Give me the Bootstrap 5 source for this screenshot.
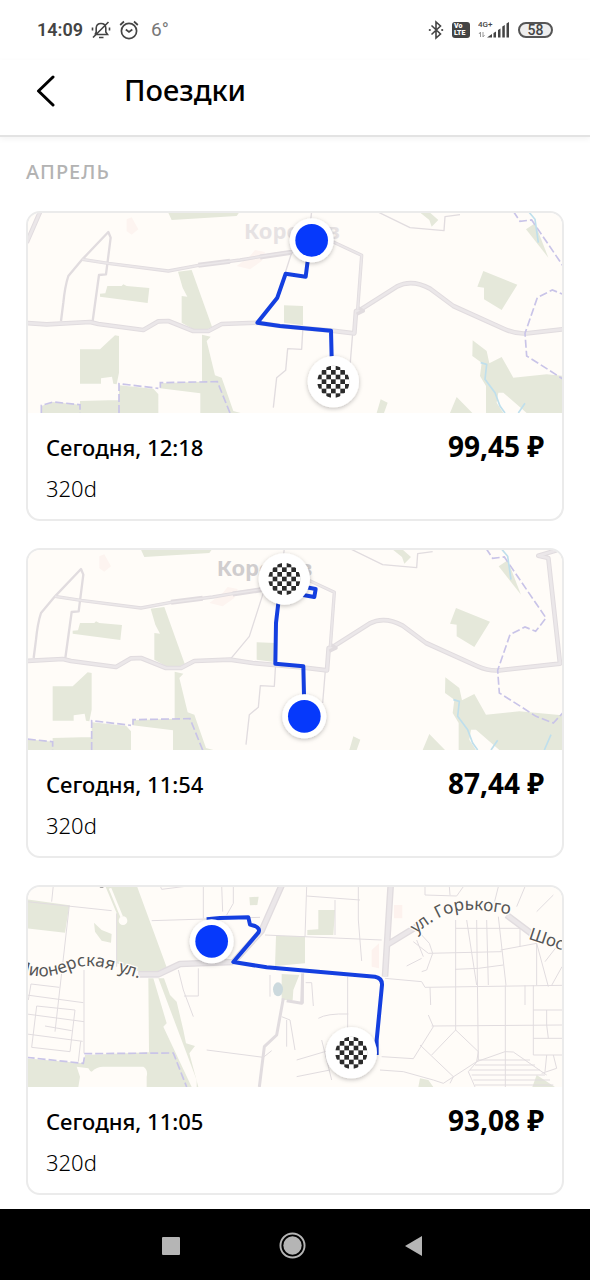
<!DOCTYPE html>
<html lang="ru">
<head>
<meta charset="utf-8">
<meta name="viewport" content="width=device-width, initial-scale=1">
<title>Поездки</title>
<link href="https://cdn.jsdelivr.net/npm/bootstrap@5.3.0/dist/css/bootstrap.min.css" rel="stylesheet">
<style>
  body { font-family: "Noto Sans", sans-serif; color: #000; background: #fff; }
  .status { height: 60px; padding: 0 37px; font-family: Roboto, sans-serif; font-size: 18px; line-height: 24px; color: #444; }
  .status svg { display: block; }
  .clock { font-weight: 600; }
  .temp { color: #777; font-size: 19px; margin-left: 12px; }
  .battery { width: 35px; height: 16px; border: 2px solid #555; border-radius: 8px; background: #eee; font-size: 14px; line-height: 12px; font-weight: 500; text-align: center; }
  .volte { width: 18px; height: 16px; border-radius: 3px; background: #444; color: #fff; font-size: 7px; line-height: 7px; font-weight: 900; padding: 1px 2px; }
  .topbar { height: 77px; padding: 0 26px; border-bottom: 2px solid #e3e3e3; box-shadow: 0 2px 6px #0000000d; }
  .topbar h1 { font-size: 29px; line-height: 36px; font-weight: 500; padding-left: 10px; }
  .back { width: 40px; height: 40px; }
  .month { font-size: 20px; line-height: 30px; font-weight: 500; color: #b3b3b3; letter-spacing: 1px; }
  .trips { padding: 20px 26px 14px; }
  .trip-list { gap: 27px; }
  .trip { border: 2px solid #ebebeb; border-radius: 14px; overflow: hidden; }
  .trip-map { display: block; width: 100%; height: 200px; background: #fffcf8; }
  .trip-info { height: 106px; padding: 16px 18px 0; }
  .when { font-size: 22px; line-height: 36px; font-weight: 500; }
  .car { font-size: 22px; line-height: 30px; padding-top: 8px; font-weight: 350; }
  .price { font-size: 28px; line-height: 34px; font-weight: 700; }
  .sysnav { height: 71px; background: #000; }
  .sysnav-keys { gap: 99px; padding-right: 6px; padding-top: 2px; }
  .green { fill: #e5e8da; }
  .road { fill: none; stroke: #e1dcdf; stroke-linejoin: round; }
  .lane { fill: none; stroke: #ebe7e9; stroke-linejoin: round; }
  .border-line { fill: none; stroke: #c9c4e8; stroke-width: 5; stroke-dasharray: 24 9; }
  .water { fill: none; stroke: #bfdfec; stroke-width: 5; }
  .route { fill: none; stroke: #143fe0; stroke-width: 12; stroke-linejoin: round; }
  .town { font: 700 66px "Noto Sans", sans-serif; }
  .street { font: 400 51px "Noto Sans", sans-serif; fill: #555; stroke: #fffcf8; stroke-width: 8; paint-order: stroke; }
</style>
</head>
<body class="d-flex flex-column min-vh-100">

<svg width="0" height="0" class="position-absolute" aria-hidden="true">
  <defs>
    <filter id="soft" x="-30%" y="-30%" width="160%" height="160%"><feDropShadow dx="0" dy="4" stdDeviation="6" flood-color="#000" flood-opacity=".25"/></filter>
    <pattern id="checks" x="-7" y="-7" width="28" height="28" patternUnits="userSpaceOnUse">
      <path d="M0 0h14v14H0zM14 14h14v14H14z" fill="#2b2b2b"/>
    </pattern>
    <g id="start"><circle r="66" fill="#fff" filter="url(#soft)"/><circle r="49" fill="#0639fb"/></g>
    <g id="finish"><circle r="77" fill="#fff" filter="url(#soft)"/><circle r="48" fill="url(#checks)"/></g>

    <g id="town-map">
      <g class="green">
        <path d="M443 16H660L650 30 455 42z"/>
        <path d="M240 272V263L256 262 262 240 305 240 310 235 320 240 388 246 383 291z"/>
        <path d="M474 197 515 192 576 362 562 370H520L485 350V270L502 272 488 245z"/>
        <path d="M546 386 572 392 560 405 585 508 605 515 640 615 662 621H541V562L420 547V532L546 527z"/>
        <path d="M180 430H240L285 388 297 390V500L290 535 280 533 276 512 243 517V533H180z"/>
        <path d="M297 538 400 548 415 565V621H297zM64 621V600L100 588 180 596V585L297 582V621z"/>
        <path d="M792 298 849 300V358L792 350z"/>
        <path d="M1198 18 1230 20 1255 42 1235 62 1228 42z"/>
        <path d="M1518 70 1545 52 1585 155z"/>
        <path d="M1390 195 1492 236 1445 312 1392 280V245L1372 242z"/>
        <path d="M1358 403 1400 435 1408 472 1445 453 1480 515 1580 505 1720 518V621H1520L1450 560 1435 560 1430 590 1450 621H1398V540L1380 510 1385 470 1357 450z"/>
        <path d="M1070 621 1082 580 1103 590 1092 621zM1290 621 1310 573 1357 621z"/>
      </g>
      <path d="M320 40 335 34 355 70 335 86 320 76zM690 150 705 132 735 138 725 165 690 190 650 180z" fill="#fdf4f0"/>
      <g class="road" stroke-width="4">
        <path d="M998 382 990 480M760 605 770 515 797 493 803 428 845 430 849 360M815 140 770 280 712 350M875 16 870 60M1070 16 1170 65 1272 74 1275 32 1320 26"/>
        <path stroke-width="7" d="M123 345 130 290Q135 240 145 210L187 160 265 78 272 95 258 205 237 207 218 345"/>
      </g>
      <path class="road" stroke-width="14" d="M20 110 60 18M20 351 80 355 210 348 235 354 370 372 415 346 445 345 520 375H565L605 354 712 350 780 360 935 374 1003 382 1008 315 1020 312 1130 242Q1175 218 1230 248L1300 300 1455 370Q1490 385 1520 382L1702 362 1667 45 1637 38 1692 22"/>
      <path class="lane" stroke-width="8" d="M20 110 60 18M20 351 80 355 210 348 235 354 370 372 415 346 445 345 520 375H565L605 354 712 350 780 360 935 374 1003 382 1008 315 1020 312 1130 242Q1175 218 1230 248L1300 300 1455 370Q1490 385 1520 382L1702 362 1667 45 1637 38 1692 22"/>
      <path class="road" stroke-width="10" d="M187 160 265 172 445 195 535 178 660 162 720 152 815 138 940 108 1025 148 1013 310M1015 305 1030 315 1010 325"/>
      <path class="road" stroke-width="15" d="M535 178 630 166M720 153 815 139"/>
      <path class="lane" stroke-width="5" d="M187 160 265 172 445 195 535 178 660 162 720 152 815 138 940 108 1025 148 1013 310"/>
      <path class="border-line" d="M64 621V598L100 588 180 596V621M297 621V533L415 547M421 545V530L592 527 630 621M1480 16 1500 46 1535 42 1660 225 1629 265 1597 252 1552 275 1515 382 1520 450 1560 475 1630 520 1682 540 1710 510"/>
      <path class="water" d="M1525 16 1545 40 1555 110M1382 470 1400 475 1395 520 1425 560 1440 600 1455 621M1495 621 1515 592M1655 621 1675 575"/>
    </g>
  </defs>
</svg>

<div class="status d-flex align-items-center justify-content-between">
  <div class="d-flex align-items-center">
    <span class="clock">14:09</span>
    <svg class="ms-2" width="20" height="20" viewBox="0 0 20 20" fill="none" stroke="#444" stroke-width="1.6" aria-label="Без звука">
      <path d="M4 14.500h12.500l-1.700-2.500V8Q14.500 3.500 10 3.500T5.200 8v4L4 14.500M8 17.500h4.500M1.500 7.500v3M18.500 7.500v3M2 17.500 17.500 2"/>
    </svg>
    <svg class="ms-2" width="20" height="20" viewBox="0 0 20 20" fill="none" stroke="#444" stroke-width="1.700" aria-label="Будильник">
      <circle cx="10" cy="11" r="7.600"/><path d="M6.800 9.500 10 12l3.300-2.500M1.200 5 5 1.500M18.800 5 15 1.500"/>
    </svg>
    <span class="temp">6°</span>
  </div>
  <div class="d-flex align-items-center gap-2">
    <svg width="16" height="20" viewBox="0 0 16 20" fill="none" stroke="#444" stroke-width="1.600" aria-label="Bluetooth">
      <path d="M3.500 5.500 12.500 14 8 18V2l4.500 4-9 8.500"/><circle cx="1.800" cy="10" r="1.100" fill="#444" stroke="none"/><circle cx="14.200" cy="10" r="1.100" fill="#444" stroke="none"/>
    </svg>
    <div class="volte">Vo<br>LTE</div>
    <svg width="32" height="20" viewBox="0 0 32 20" fill="#444" aria-label="Сигнал сети">
      <text x="0" y="7" font-family="Roboto, sans-serif" font-weight="500" font-size="8">4G+</text>
      <path d="M9 17.500 14 14v3.500zM15.500 13l2.500-1.600v6.100h-2.500zM20 10l2.500-1.600v9.100H20zM24.300 6.500l2.500-1.600v12.600h-2.500zM28.500 3.500 31 2v15.500h-2.500z"/>
      <path d="M2.500 17v-5l-1.500 2M5 12v5l1.500-2" fill="none" stroke="#999"/>
    </svg>
    <div class="battery">58</div>
  </div>
</div>

<header class="topbar d-flex align-items-start">
  <button class="back btn p-0 border-0 mt-2 pt-1" type="button" aria-label="Назад">
    <svg class="d-block mx-auto" width="20" height="34" viewBox="0 0 20 34" fill="none" stroke="#000" stroke-width="3" stroke-linecap="round" stroke-linejoin="round"><path d="M17 4 2.500 18 17 32"/></svg>
  </button>
  <h1 class="mb-0 ms-5 mt-2 pt-1">Поездки</h1>
</header>

<main class="trips flex-grow-1">
  <h2 class="month mb-4">АПРЕЛЬ</h2>
  <div class="trip-list d-flex flex-column">

    <article class="trip">
      <svg class="trip-map" viewBox="24 21 1602 600" preserveAspectRatio="xMidYMid slice" role="img" aria-label="Маршрут">
        <use href="#town-map"/>
        <text class="town" x="672" y="100" fill="#e6e2e3">Королёв</text>
        <path class="route" d="M863 165 857 212 797 203 772 275 712 350 780 360 933 374 935 455"/>
        <use href="#start" x="875" y="103"/>
        <use href="#finish" x="940" y="527"/>
      </svg>
      <div class="trip-info">
        <div class="d-flex justify-content-between align-items-start">
          <div class="when">Сегодня, 12:18</div>
          <div class="price">99,45 ₽</div>
        </div>
        <div class="car">320d</div>
      </div>
    </article>

    <article class="trip">
      <svg class="trip-map" viewBox="24 21 1602 600" preserveAspectRatio="xMidYMid slice" role="img" aria-label="Маршрут">
        <use href="#town-map" x="-82"/>
        <text class="town" x="590" y="100" fill="#d0cdce">Королёв</text>
        <path class="route" d="M775 180 768 240 766 362 850 370 852 455M845 155 883 162 887 138 855 132"/>
        <use href="#finish" x="793" y="108"/>
        <use href="#start" x="853" y="520"/>
      </svg>
      <div class="trip-info">
        <div class="d-flex justify-content-between align-items-start">
          <div class="when">Сегодня, 11:54</div>
          <div class="price">87,44 ₽</div>
        </div>
        <div class="car">320d</div>
      </div>
    </article>

    <article class="trip">
      <svg class="trip-map" viewBox="24 21 1602 600" preserveAspectRatio="xMidYMid slice" role="img" aria-label="Маршрут">
        <g class="green">
          <path d="M255 16H350L440 262 412 282 360 275 290 250V100z"/>
          <path d="M20 58 148 76 135 158 20 145z"/>
          <path d="M222 128 245 150 275 162 273 188 245 182 225 155z"/>
          <path d="M688 52 716 50 712 75 690 76z"/>
          <path d="M385 295H432L450 345 470 365 490 450 498 490 525 498 508 520 535 621H20V535L190 550 195 525 387 517z"/>
          <path d="M768 168H855V250L765 258zM785 282 838 285 820 330 818 360H785z"/>
          <path d="M895 90H945L940 165H862V150L895 148z"/>
          <path d="M1195 621 1200 595 1225 600 1240 621zM1537 621 1550 585 1605 621z"/>
        </g>
        <path fill="#fffcf8" d="M175 621 180 590 170 560 205 565Q210 575 215 575 230 560 250 560L370 560Q385 570 380 590V621zM400 295 415 295 530 600V621H515L430 440 440 430 455 480z"/>
        <path d="M270 25 305 110" stroke="#fffcf8" stroke-width="8"/><circle cx="309" cy="122" r="13" fill="#fffcf8"/>
        <ellipse cx="774" cy="328" rx="15" ry="21" fill="#ccd9dd"/>
        <path d="M1122 75h25v40h-25zM1055 210l22-20v75l-22-5z" fill="#fdf2ee"/>
        <g class="road" stroke-width="3">
          <path d="M100 16 95 65M20 65 275 92M148 76 105 455M33 312 118 322M20 345 190 368M20 402 192 425M20 462 188 484M50 378 165 390 150 515 35 502zM75 438 155 452M33 312 25 360M192 270V520M182 484 175 545M290 100V260"/>
          <path d="M395 122 720 112M420 16 425 28 520 16M550 16V115M605 16 608 95M640 16V70L620 105M475 270 490 330 520 410M535 265V348H492M560 510 730 532 755 512M735 165 1085 180M750 285V350M850 280V370L820 365M857 308H875L880 378M785 410 810 420 825 510M800 420V500M830 540 965 500M895 415Q920 400 985 402M983 290V455M860 20 855 170M860 48 1020 60M1015 20V120L1025 243M945 60V165M830 590 930 570M905 480 935 600M1085 530 1180 536 1240 440 1225 405M1080 570 1150 575 1240 600 1270 610 1370 545"/>
          <path d="M1095 295 1205 305 1215 322 1626 316M1230 322 1232 375M1180 185 1225 220 1445 215M1190 180 1210 230M1205 165 1228 190 1238 220 1220 270 1205 275M1160 258 1205 235M1215 18V45L1310 48 1330 20M1288 20 1290 45M1307 120V450L1235 525M1307 145H1500V200M1340 120 1370 315M1370 120 1375 540M1400 120 1405 315M1435 110 1458 316M1305 268 1375 265 1450 255M1442 210 1550 190 1550 316M1235 438 1626 435M1456 316V621M1307 450 1375 515 1370 545 1455 515 1480 516 1580 585M1200 495 1300 590 1290 610M1375 540 1345 575 1365 621M1515 316V375M1540 316V525H1626M1540 390H1626M1540 475H1626M1580 390V435L1585 475M1580 525 1575 575M1600 525 1610 565 1565 580M1550 190 1585 320M1595 316 1626 260M1575 245 1610 200M1435 20 1420 80M1515 20 1490 80M1550 95 1600 45"/>
          <path d="M1375 540H1530M1365 555H1545M1350 570H1560M1355 585H1575M1360 600H1590M1365 615H1600"/>
        </g>
        <path class="road" stroke-width="20" d="M355 283H415L480 252 640 246M640 246 725 152 785 16M1112 16 1095 290M1100 195 1190 140M1460 105 1540 165"/>
        <path class="lane" stroke-width="12" d="M355 283H415L480 252 640 246M640 246 725 152 785 16M1112 16 1095 290M1100 195 1190 140M1460 105 1540 165"/>
        <path class="road" stroke-width="9" d="M790 355 770 465 733 500 718 621M848 280 845 370 800 362"/>
        <path class="border-line" stroke-width="4" d="M20 532 190 550 195 521 460 519 500 621"/>
        <path d="M235 16Q245 24 255 16" fill="none" stroke="#555" stroke-width="5"/>
        <path id="pioneer" fill="none" d="M-11 275C50 296 100 292 150 270 190 252 230 256 275 270L380 302"/>
        <path id="gorky" fill="none" d="M1188 162C1240 118 1290 92 1340 90 1390 88 1440 98 1500 108"/>
        <path id="highway" fill="none" d="M1524 176 1700 235"/>
        <text class="street"><textPath href="#pioneer">Пионерская ул.</textPath></text>
        <text class="street"><textPath href="#gorky">ул. Горького</textPath></text>
        <text class="street"><textPath href="#highway">Шос</textPath></text>
        <path class="route" d="M560 118 600 114 685 112 690 134 705 138Q722 146 715 158L640 246 740 262 1065 290Q1087 294 1086 315L1070 480V525"/>
        <use href="#start" x="575" y="184"/>
        <use href="#finish" x="994" y="518"/>
      </svg>
      <div class="trip-info">
        <div class="d-flex justify-content-between align-items-start">
          <div class="when">Сегодня, 11:05</div>
          <div class="price">93,08 ₽</div>
        </div>
        <div class="car">320d</div>
      </div>
    </article>
  </div>
</main>

<nav class="sysnav d-flex align-items-center justify-content-center" aria-label="Система">
  <div class="sysnav-keys d-flex align-items-center">
    <button class="btn p-0 border-0" type="button" aria-label="Недавние"><svg class="d-block" width="18" height="18"><rect width="18" height="18" rx="1" fill="#b5b5b5"/></svg></button>
    <button class="btn p-0 border-0" type="button" aria-label="Домой"><svg class="d-block" width="27" height="27" viewBox="0 0 28 28"><circle cx="14" cy="14" r="12.500" fill="none" stroke="#b5b5b5" stroke-width="2"/><circle cx="14" cy="14" r="9.500" fill="#b5b5b5"/></svg></button>
    <button class="btn p-0 border-0" type="button" aria-label="Назад"><svg class="d-block" width="17" height="20"><path d="M17 0v20L0 10z" fill="#b5b5b5"/></svg></button>
  </div>
</nav>

<script src="https://cdn.jsdelivr.net/npm/bootstrap@5.3.0/dist/js/bootstrap.bundle.min.js"></script>
</body>
</html>
